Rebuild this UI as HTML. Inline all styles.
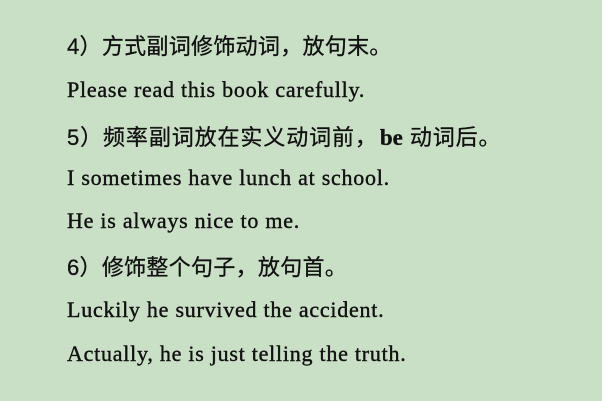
<!DOCTYPE html>
<html><head><meta charset="utf-8"><style>
body{margin:0;width:602px;height:401px;background:#cae0c6;overflow:hidden;position:relative;color:#111}
.l{position:absolute;left:67px;white-space:nowrap}
.c{font-family:"Liberation Sans","Noto Sans CJK SC",sans-serif;font-size:22px;letter-spacing:0.3px;-webkit-text-stroke:0.3px #111}
.c5{letter-spacing:0.9px}
.e{font-family:"Liberation Serif",serif;font-size:22px;letter-spacing:0.75px;-webkit-text-stroke:0.4px #111}
.b{font-family:"Liberation Serif",serif;font-size:23px;font-weight:bold;margin:0 7px 0 2px;letter-spacing:0}
</style></head><body>
<div class="l c" style="top:29px">4）方式副词修饰动词，放句末。</div>
<div class="l e" style="top:77px">Please read this book carefully.</div>
<div class="l c c5" style="top:120px">5）频率副词放在实义动词前，<span class="b">be</span>动词后。</div>
<div class="l e" style="top:165px">I sometimes have lunch at school.</div>
<div class="l e" style="top:208px">He is always nice to me.</div>
<div class="l c" style="top:250px">6）修饰整个句子，放句首。</div>
<div class="l e" style="top:297px">Luckily he survived the accident.</div>
<div class="l e" style="top:341px">Actually, he is just telling the truth.</div>
</body></html>
